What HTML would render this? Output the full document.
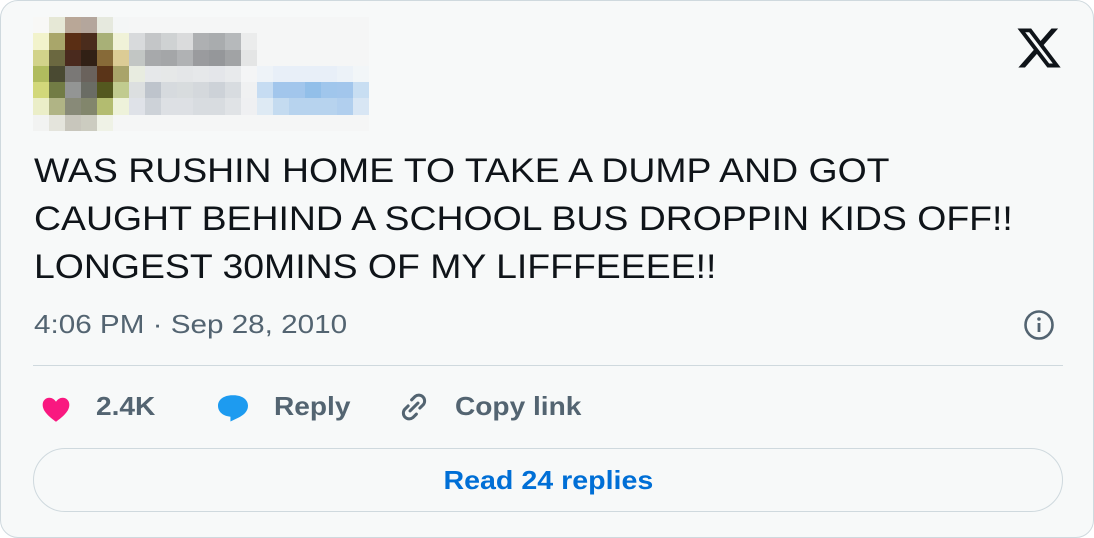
<!DOCTYPE html>
<html><head><meta charset="utf-8"><style>
body{margin:0;width:1094px;height:538px;background:#fff;font-family:"Liberation Sans",Arial,sans-serif;overflow:hidden;position:relative}
.card{position:absolute;left:0;top:0;width:1092px;height:536px;border:1px solid #cfd9de;border-radius:18px;background:#f7f9f9}
.grid{position:absolute;left:32px;top:16px;display:grid;grid-template-columns:repeat(21,16px);grid-template-rows:repeat(7,16.3px)}
.grid div{width:16px;height:16.3px}
.txt{position:absolute;left:33px;top:146px;font-size:34px;line-height:48px;color:#0f1419;transform:scaleX(1.1);transform-origin:0 0;white-space:nowrap}
.time{position:absolute;left:33px;top:308px;font-size:26px;color:#536471;transform:scaleX(1.14);transform-origin:0 0;white-space:nowrap}
.hr{position:absolute;left:32px;top:364px;width:1030px;height:1px;background:#cfd9de}
.act{position:absolute;top:390px;font-size:26px;font-weight:bold;color:#536471;transform:scaleX(1.08);transform-origin:0 0;white-space:nowrap}
.btn{position:absolute;left:32px;top:447px;width:1028px;height:62px;border:1px solid #cfd9de;border-radius:32px;text-align:center;line-height:62px;font-size:26px;font-weight:bold;color:#006fd6}
.btn span{display:inline-block;transform:scaleX(1.1)}
</style></head><body><div class="card">
<div class="grid" id="g"></div>
<svg style="position:absolute;left:1014px;top:23px" width="48" height="48" viewBox="0 0 24 24"><path fill="#0f1419" d="M18.244 2.25h3.308l-7.227 8.26 8.502 11.24H16.17l-5.214-6.817L4.99 21.75H1.68l7.73-8.835L1.254 2.25H8.08l4.713 6.231zm-1.161 17.52h1.833L7.084 4.126H5.117z"/></svg>
<div class="txt">WAS RUSHIN HOME TO TAKE A DUMP AND GOT<br>CAUGHT BEHIND A SCHOOL BUS DROPPIN KIDS OFF!!<br>LONGEST 30MINS OF MY LIFFFEEEE!!</div>
<div class="time">4:06 PM · Sep 28, 2010</div>
<svg style="position:absolute;left:1022px;top:308px" width="32" height="32" viewBox="0 0 32 32"><circle cx="16" cy="16" r="13.5" fill="none" stroke="#536471" stroke-width="2.6"/><rect x="14.6" y="14" width="2.8" height="9" fill="#536471"/><circle cx="16" cy="10" r="1.8" fill="#536471"/></svg>
<div class="hr"></div>
<svg style="position:absolute;left:38px;top:392px" width="34" height="32" viewBox="0 0 24 24"><path fill="#f91880" d="M12 21.6C7 17.8 2 13.9 2 8.8 2 5.8 4.2 3.6 7 3.6c2 0 3.8 1.2 5 3 1.2-1.8 3-3 5-3 2.8 0 5 2.2 5 5.2 0 5.1-5 9-10 12.8z"/></svg>
<div class="act" style="left:95px">2.4K</div>
<svg style="position:absolute;left:214px;top:389px" width="36" height="36" viewBox="0 0 24 24"><path fill="#1d9bf0" d="M2 10.5C2 6.4 5.9 3.5 11.5 3.5h1c5.6 0 9.5 2.9 9.5 7 0 4.1-3.5 6.5-6.5 8L10.3 21v-3.2C5.4 17.4 2 14.6 2 10.5z"/></svg>
<div class="act" style="left:273px">Reply</div>
<svg style="position:absolute;left:394px;top:387px" width="38" height="38" viewBox="0 0 24 24" fill="none" stroke="#536471" stroke-width="1.9" stroke-linecap="round"><path d="M10.5 7.5l2.2-2.2a3.7 3.7 0 015.2 5.2l-2.2 2.2M13.5 16.5l-2.2 2.2a3.7 3.7 0 01-5.2-5.2l2.2-2.2M9.5 14.5l5-5"/></svg>
<div class="act" style="left:454px">Copy link</div>
<div class="btn"><span>Read 24 replies</span></div>
</div>
<script>
var r=[
"f8f8f6 e6e8d6 b9a797 b4a69c e6e9de f4f6f6",
"f2f3cc a9a66a 5a2e14 4a2c1c a8b077 f0f2d8 d8dadc c4c6c8 cfd2d3 dadbdc aeb0b2 a9acae b6b9bb ebecec",
"d2d38a 6b6840 4a2a1e 312015 876a38 dccc95 c2c6c4 a7a9ab a4a6a8 b0b2b4 9a9b9e 95979a a1a3a5 e4e5e5",
"b0bc5e 4a4a32 7a7876 6a625c 5a3418 a9a46a e8ece0 e6e8ea e6e8e8 e4e6e8 e6e8ea e4e6ea e8eaec f4f5f6 eef3f8 e8eff8 e8eff8 e8eff8 e8eff8 ecf2f8 f2f6f8",
"d2d87a 727c45 939594 6a6c64 54581f c1cb8f dcdfe0 bec4cc d6dade d8dcde d4d8dc cdd2d8 d8dce0 f0f1f2 c6dcf2 a2c6ec a2c6ec 92bfe9 a0c6ec a2c6ec c8def2",
"ebeec8 b0b485 888a78 82866c b3bc70 eef2da dfe2e8 cdd2d8 dde0e4 dde0e4 d8dce0 d8dce0 e0e3e6 eff0f2 deeaf4 c4dbf0 b7d3ee b7d3ee b7d3ee b1cfee d8e6f4",
"f2f3f2 e4e4dc c8c6bc ccccc0 eff2e6"];
var h="";r.forEach(function(l){var c=l.split(" ");for(var i=0;i<21;i++)h+='<div style="background:#'+(c[i]||"f5f6f6")+'"></div>';});
document.getElementById("g").innerHTML=h;
</script>
</body></html>
